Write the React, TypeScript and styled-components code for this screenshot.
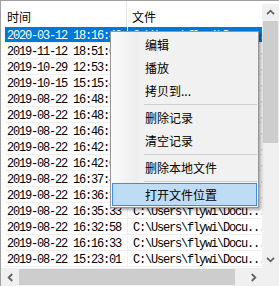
import React from "react";
import styled, { createGlobalStyle } from "styled-components";

const GlobalStyle = createGlobalStyle`
  html, body {
    margin: 0;
    padding: 0;
    background: #ffffff;
  }
  body {
    font-family: "Noto Sans CJK SC", "Noto Sans", sans-serif;
    font-size: 12px;
    color: #000000;
  }
`;

type Direction = "up" | "down" | "left" | "right";

const rotation: Record<Direction, number> = { up: 0, right: 90, down: 180, left: 270 };

const records = [
  "2020-03-12 18:16:40",
  "2019-11-12 18:51:07",
  "2019-10-29 12:53:21",
  "2019-10-15 15:15:48",
  "2019-08-22 16:48:52",
  "2019-08-22 16:48:13",
  "2019-08-22 16:46:39",
  "2019-08-22 16:42:55",
  "2019-08-22 16:42:02",
  "2019-08-22 16:37:44",
  "2019-08-22 16:36:18",
  "2019-08-22 16:35:33",
  "2019-08-22 16:32:58",
  "2019-08-22 16:16:33",
  "2019-08-22 15:23:01",
];

const filePath = "C:\\Users\\flywi\\Docu...";

type MenuEntry = { label: string; separator?: false; hot?: boolean } | { separator: true };

const menu: MenuEntry[] = [
  { label: "编辑" },
  { label: "播放" },
  { label: "拷贝到..." },
  { separator: true },
  { label: "删除记录" },
  { label: "清空记录" },
  { separator: true },
  { label: "删除本地文件" },
  { separator: true },
  { label: "打开文件位置", hot: true },
];

function Chevron({ dir }: { dir: Direction }) {
  return (
    <ArrowSvg $rot={rotation[dir]} width="9" height="9" viewBox="0 0 9 9">
      <path d="M1 6.2 L4.5 2.7 L8 6.2" fill="none" stroke="#606060" strokeWidth="1.8" />
    </ArrowSvg>
  );
}

export default function App() {
  return (
    <>
      <GlobalStyle />
      <Frame>
        <ListPane>
          <Header>
            <HeaderCell $width={126}>时间</HeaderCell>
            <HeaderCell>文件</HeaderCell>
          </Header>
          <Rows>
            {records.map((time, i) => (
              <Row key={i} $selected={i === 0}>
                <TimeCell>{time}</TimeCell>
                <FileCell>{filePath}</FileCell>
              </Row>
            ))}
          </Rows>
        </ListPane>

        <VScroll>
          <VButton>
            <Chevron dir="up" />
          </VButton>
          <VThumb />
          <Spacer />
          <VButton>
            <Chevron dir="down" />
          </VButton>
        </VScroll>

        <HScroll>
          <HButton $width={18}>
            <Chevron dir="left" />
          </HButton>
          <HThumb />
          <Spacer />
          <HButton $width={17}>
            <Chevron dir="right" />
          </HButton>
        </HScroll>
        <Corner />

        <ContextMenu>
          {menu.map((entry, i) =>
            entry.separator ? (
              <Separator key={i} />
            ) : (
              <MenuItem key={i} $hot={!!entry.hot}>
                {entry.label}
              </MenuItem>
            )
          )}
        </ContextMenu>
      </Frame>
    </>
  );
}

const Frame = styled.div`
  position: relative;
  display: grid;
  grid-template-columns: 261px 17px;
  grid-template-rows: 267px 18px;
  width: 279px;
  height: 286px;
  box-sizing: border-box;
  border-left: 1px solid #a0a0a0;
  border-top: 1px solid #a0a0a0;
  overflow: hidden;
  background: #ffffff;
`;

const ListPane = styled.div`
  display: flex;
  flex-direction: column;
  overflow: hidden;
`;

const Header = styled.div`
  display: flex;
  height: 26px;
  flex-shrink: 0;
`;

const HeaderCell = styled.div<{ $width?: number }>`
  box-sizing: border-box;
  width: ${(p) => (p.$width ? `${p.$width}px` : "auto")};
  flex: ${(p) => (p.$width ? "none" : "1")};
  padding: 7px 0 0 ${(p) => (p.$width ? 6 : 5)}px;
  line-height: 17px;
  border-right: ${(p) => (p.$width ? "1px solid #e5e5e5" : "none")};
  white-space: nowrap;
`;

const Rows = styled.div`
  display: flex;
  flex-direction: column;
  padding-left: 4px;
`;

const Row = styled.div<{ $selected: boolean }>`
  display: flex;
  height: 16px;
  flex: none;
  box-sizing: border-box;
  border-bottom: 1px solid #f0f0f0;
  background: ${(p) => (p.$selected ? "#0078d7" : "transparent")};
  color: ${(p) => (p.$selected ? "#ffffff" : "#000000")};
  font-family: "Liberation Mono", "DejaVu Sans Mono", monospace;
  font-size: 12px;
  letter-spacing: -1.2px;
  line-height: 19px;
  white-space: nowrap;
`;

const TimeCell = styled.div`
  box-sizing: border-box;
  width: 123px;
  flex: none;
  padding-left: 2px;
  border-right: 1px solid #f0f0f0;
  overflow: hidden;
`;

const FileCell = styled.div`
  flex: 1;
  padding-left: 5px;
  overflow: hidden;
`;

const VScroll = styled.div`
  display: flex;
  flex-direction: column;
  margin-top: 3px;
  background: #f0f0f0;
`;

const VButton = styled.div`
  display: flex;
  align-items: center;
  justify-content: center;
  height: 17px;
  flex: none;
`;

const VThumb = styled.div`
  height: 122px;
  flex: none;
  margin: 0 1px;
  background: #cdcdcd;
`;

const Spacer = styled.div`
  flex: 1;
`;

const HScroll = styled.div`
  display: flex;
  background: #f0f0f0;
`;

const HButton = styled.div<{ $width: number }>`
  display: flex;
  align-items: center;
  justify-content: center;
  width: ${(p) => p.$width}px;
  flex: none;
`;

const HThumb = styled.div`
  width: 216px;
  flex: none;
  margin: 1px 0;
  background: #cdcdcd;
`;

const Corner = styled.div`
  background: #f0f0f0;
`;

const ArrowSvg = styled.svg<{ $rot: number }>`
  display: block;
  transform: rotate(${(p) => p.$rot}deg);
`;

const ContextMenu = styled.div`
  position: absolute;
  z-index: 10;
  left: 109px;
  top: 30px;
  width: 149px;
  box-sizing: border-box;
  padding: 1px;
  border: 1px solid #979797;
  background: linear-gradient(to right, #fbfbfb 0px, #ededed 26px, #f1f1f1 30px, #f1f1f1 100%);
  box-shadow: 2px 2px 3px rgba(0, 0, 0, 0.35);
  display: flex;
  flex-direction: column;
`;

const MenuItem = styled.div<{ $hot: boolean }>`
  height: 23px;
  flex: none;
  box-sizing: border-box;
  padding-left: ${(p) => (p.$hot ? 32 : 33)}px;
  line-height: ${(p) => (p.$hot ? 21 : 23)}px;
  border: ${(p) => (p.$hot ? "1px solid #3a8ee6" : "none")};
  background: ${(p) => (p.$hot ? "#bfdcf5" : "transparent")};
  font-size: 12px;
  white-space: nowrap;
`;

const Separator = styled.div`
  height: 4px;
  flex: none;
  display: flex;
  align-items: center;
  padding-left: 32px;

  &::after {
    content: "";
    flex: 1;
    height: 1px;
    background: #d0d0d0;
  }
`;
